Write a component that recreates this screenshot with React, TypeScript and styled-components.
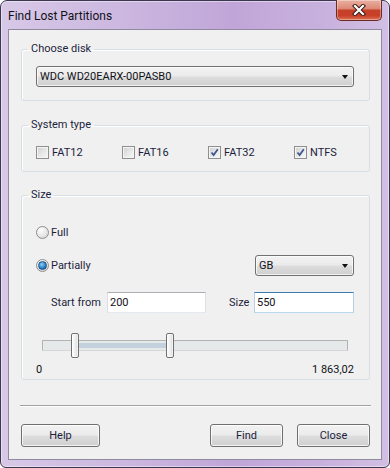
import styled, { createGlobalStyle } from "styled-components";

const GlobalStyle = createGlobalStyle`
  html, body {
    margin: 0;
    padding: 0;
    background: #ffffff;
  }
  body {
    font-family: Roboto, "Liberation Sans", sans-serif;
  }
  * {
    box-sizing: border-box;
  }
`;

const TEXT = "#1c1e3c";

// slider data
const MAX_SIZE = 1863.02;
const START = 200;
const SIZE = 550;
const SCALE_PX = 320;

const Window = styled.div`
  width: 390px;
  height: 468px;
  display: flex;
  flex-direction: column;
  padding: 0 7px 7px;
  border: 1px solid #3d3650;
  border-radius: 7px 7px 6px 6px;
  background: linear-gradient(
    90deg,
    #d8c8e7 0%,
    #ccb8e0 30%,
    #c0a6d8 60%,
    #c8b0dd 82%,
    #d2bfe3 100%
  );
  box-shadow: inset 0 0 0 1px rgba(255, 255, 255, 0.45);
`;

const TitleBar = styled.div`
  height: 28px;
  display: flex;
  align-items: center;
  justify-content: space-between;
`;

const TitleText = styled.span`
  font-size: 12px;
  color: #111118;
  margin-top: 1px;
`;

const CloseButton = styled.div`
  align-self: flex-start;
  margin-top: -1px;
  width: 46px;
  height: 21px;
  display: flex;
  align-items: center;
  justify-content: center;
  border: 1px solid #6b2a22;
  border-top: none;
  border-radius: 0 0 5px 5px;
  background: linear-gradient(
    #eab0a2 0%,
    #dd8b78 42%,
    #c6412a 52%,
    #c93f28 78%,
    #dc7256 100%
  );
  box-shadow: inset 0 0 0 1px rgba(255, 255, 255, 0.35);
`;

const Client = styled.div`
  flex: 1;
  display: flex;
  flex-direction: column;
  background: #f0f0f0;
  border: 1px solid #8f8aa0;
  padding: 12px 11px 12px 12px;
  color: ${TEXT};
  font-size: 11px;
`;

const Group = styled.fieldset<{ $gap?: number }>`
  margin: ${(p) => p.$gap ?? 0}px 0 0;
  padding: 0;
  min-width: 0;
  border: 1px solid #d5dfe5;
  border-radius: 3px;
  box-shadow: inset 1px 1px 0 #ffffff;
`;

const Legend = styled.legend`
  margin-left: 6px;
  padding: 0 3px;
  font-size: 11px;
  line-height: 14px;
  color: ${TEXT};
`;

const DiskBody = styled.div`
  padding: 10px 15px 13px 14px;
`;

const TypeBody = styled.div`
  padding: 13px 14px 12px;
  display: grid;
  grid-template-columns: repeat(4, 86px);
`;

const SizeBody = styled.div`
  padding: 0 15px 3px 14px;
  display: flex;
  flex-direction: column;
`;

const ComboBox = styled.div<{ $width?: number }>`
  height: 21px;
  width: ${(p) => (p.$width ? `${p.$width}px` : "auto")};
  display: flex;
  align-items: center;
  justify-content: space-between;
  padding: 0 5px 0 3px;
  border: 1px solid #707070;
  border-radius: 3px;
  background: linear-gradient(#f2f2f2 0%, #ebebeb 48%, #dddddd 52%, #cfcfcf 100%);
  box-shadow: inset 0 0 0 1px rgba(255, 255, 255, 0.7);
  font-size: 11px;
  color: #111118;
`;

const ComboArrow = styled.span`
  width: 0;
  height: 0;
  border-left: 3.5px solid transparent;
  border-right: 3.5px solid transparent;
  border-top: 4px solid #111;
`;

const CheckItem = styled.label`
  display: flex;
  align-items: center;
  gap: 3px;
  height: 14px;
  font-size: 11px;
  color: ${TEXT};
`;

const CheckBox = styled.span`
  width: 13px;
  height: 13px;
  display: flex;
  align-items: center;
  justify-content: center;
  border: 1px solid #8e8f8f;
  background: linear-gradient(135deg, #cfcfcf 0%, #e8e8e8 55%, #f8f8f8 100%);
  box-shadow: inset 0 0 0 1px #f4f4f4;
`;

const RadioLine = styled.label<{ $top: number }>`
  margin-top: ${(p) => p.$top}px;
  height: 16px;
  display: flex;
  align-items: center;
  gap: 2px;
  font-size: 11px;
  color: ${TEXT};
`;

const RadioDot = styled.span<{ $on?: boolean }>`
  width: 13px;
  height: 13px;
  border-radius: 50%;
  display: flex;
  align-items: center;
  justify-content: center;
  border: 1px solid #8d8d8d;
  background: radial-gradient(circle at 35% 30%, #ffffff 0%, #e4e4e4 60%, #c8c8c8 100%);

  &::after {
    content: "";
    display: ${(p) => (p.$on ? "block" : "none")};
    width: 7px;
    height: 7px;
    border-radius: 50%;
    border: 1px solid #1d4f86;
    background: radial-gradient(circle at 40% 35%, #8fd0f5 0%, #2d86c8 55%, #0e4d8e 100%);
  }
`;

const OptionRow = styled.div`
  margin-top: 15px;
  height: 21px;
  display: flex;
  align-items: center;
  justify-content: space-between;
`;

const OptionLabel = styled.label`
  display: flex;
  align-items: center;
  gap: 2px;
  color: ${TEXT};
`;

const FieldRow = styled.div`
  margin-top: 16px;
  padding-left: 15px;
  display: grid;
  grid-template-columns: 56px 99px 23px 25px 100px;
  align-items: center;
  height: 21px;
`;

const FieldLabel = styled.span<{ $col: number }>`
  grid-column: ${(p) => p.$col};
  color: ${TEXT};
`;

const TextBox = styled.div<{ $focused?: boolean; $col: number }>`
  grid-column: ${(p) => p.$col};
  height: 21px;
  display: flex;
  align-items: center;
  padding-left: 2px;
  background: #ffffff;
  border: 1px solid ${(p) => (p.$focused ? "#b5cfe7" : "#dbdfe6")};
  border-top-color: ${(p) => (p.$focused ? "#3d7bad" : "#abadb3")};
  border-bottom-color: ${(p) => (p.$focused ? "#b7d9ed" : "#e3e9ef")};
  color: #111118;
`;

const SliderArea = styled.div`
  margin-top: 20px;
  height: 25px;
  padding: 7px 6px 0;
`;

const Track = styled.div`
  position: relative;
  height: 11px;
  border: 1px solid #b2b2b2;
  border-bottom-color: #d6d6d6;
  border-radius: 1px;
  background: #e6e9ea;
`;

const RangeFill = styled.div`
  position: absolute;
  top: 2px;
  height: 5px;
  background: #c3d1de;
`;

const Thumb = styled.div`
  position: absolute;
  top: -8px;
  width: 8px;
  height: 25px;
  border: 1px solid #707070;
  border-radius: 2px;
  background: linear-gradient(90deg, #ffffff 0%, #ececec 60%, #d8d8d8 100%);
  box-shadow: inset 0 0 0 1px rgba(255, 255, 255, 0.6);
`;

const Scale = styled.div`
  margin-top: 4px;
  height: 14px;
  display: flex;
  align-items: center;
  justify-content: space-between;
  color: #111118;
`;

const Separator = styled.div`
  margin: 25px -1px 0;
  border-top: 1px solid #a0a0a0;
  border-bottom: 1px solid #ffffff;
`;

const ButtonRow = styled.div`
  margin-top: 17px;
  display: flex;
  gap: 14px;
`;

const Button = styled.button<{ $width: number; $push?: boolean }>`
  width: ${(p) => p.$width}px;
  height: 23px;
  margin-right: ${(p) => (p.$push ? "auto" : "0")};
  padding: 0;
  border: 1px solid #707070;
  border-radius: 3px;
  background: linear-gradient(#f2f2f2 0%, #ebebeb 48%, #dddddd 52%, #cfcfcf 100%);
  box-shadow: inset 0 0 0 1px rgba(255, 255, 255, 0.75);
  font-family: Roboto, "Liberation Sans", sans-serif;
  font-size: 11px;
  color: ${TEXT};
`;

const CheckMark = () => (
  <svg width="9" height="9" viewBox="0 0 9 9">
    <path d="M1.5 4.5 L3.6 7 L7.8 1.2" fill="none" stroke="#3b5390" strokeWidth="1.7" />
  </svg>
);

const CloseGlyph = () => (
  <svg width="14" height="12" viewBox="0 0 14 12">
    <path d="M3 2 L11 10 M11 2 L3 10" stroke="#3a1c16" strokeWidth="4.2" strokeLinecap="square" />
    <path d="M3 2 L11 10 M11 2 L3 10" stroke="#ffffff" strokeWidth="2.2" strokeLinecap="square" />
  </svg>
);

const systems = [
  { name: "FAT12", checked: false },
  { name: "FAT16", checked: false },
  { name: "FAT32", checked: true },
  { name: "NTFS", checked: true },
];

export default function App() {
  const from = (START / MAX_SIZE) * SCALE_PX - 2;
  const to = ((START + SIZE) / MAX_SIZE) * SCALE_PX - 2;

  return (
    <>
      <GlobalStyle />
      <Window>
        <TitleBar>
          <TitleText>Find Lost Partitions</TitleText>
          <CloseButton>
            <CloseGlyph />
          </CloseButton>
        </TitleBar>

        <Client>
          <Group>
            <Legend>Choose disk</Legend>
            <DiskBody>
              <ComboBox>
                <span>WDC WD20EARX-00PASB0</span>
                <ComboArrow />
              </ComboBox>
            </DiskBody>
          </Group>

          <Group $gap={17}>
            <Legend>System type</Legend>
            <TypeBody>
              {systems.map((s) => (
                <CheckItem key={s.name}>
                  <CheckBox>{s.checked && <CheckMark />}</CheckBox>
                  {s.name}
                </CheckItem>
              ))}
            </TypeBody>
          </Group>

          <Group $gap={16}>
            <Legend>Size</Legend>
            <SizeBody>
              <RadioLine $top={22}>
                <RadioDot />
                Full
              </RadioLine>
              <OptionRow>
                <OptionLabel>
                  <RadioDot $on />
                  Partially
                </OptionLabel>
                <ComboBox $width={99}>
                  <span>GB</span>
                  <ComboArrow />
                </ComboBox>
              </OptionRow>
              <FieldRow>
                <FieldLabel $col={1}>Start from</FieldLabel>
                <TextBox $col={2}>{START}</TextBox>
                <FieldLabel $col={4}>Size</FieldLabel>
                <TextBox $col={5} $focused>
                  {SIZE}
                </TextBox>
              </FieldRow>
              <SliderArea>
                <Track>
                  <RangeFill style={{ left: from + 4, width: to - from - 8 }} />
                  <Thumb style={{ left: from - 4 }} />
                  <Thumb style={{ left: to - 4 }} />
                </Track>
              </SliderArea>
              <Scale>
                <span>0</span>
                <span>1 863,02</span>
              </Scale>
            </SizeBody>
          </Group>

          <Separator />

          <ButtonRow>
            <Button $width={79} $push>
              Help
            </Button>
            <Button $width={73}>Find</Button>
            <Button $width={73}>Close</Button>
          </ButtonRow>
        </Client>
      </Window>
    </>
  );
}
